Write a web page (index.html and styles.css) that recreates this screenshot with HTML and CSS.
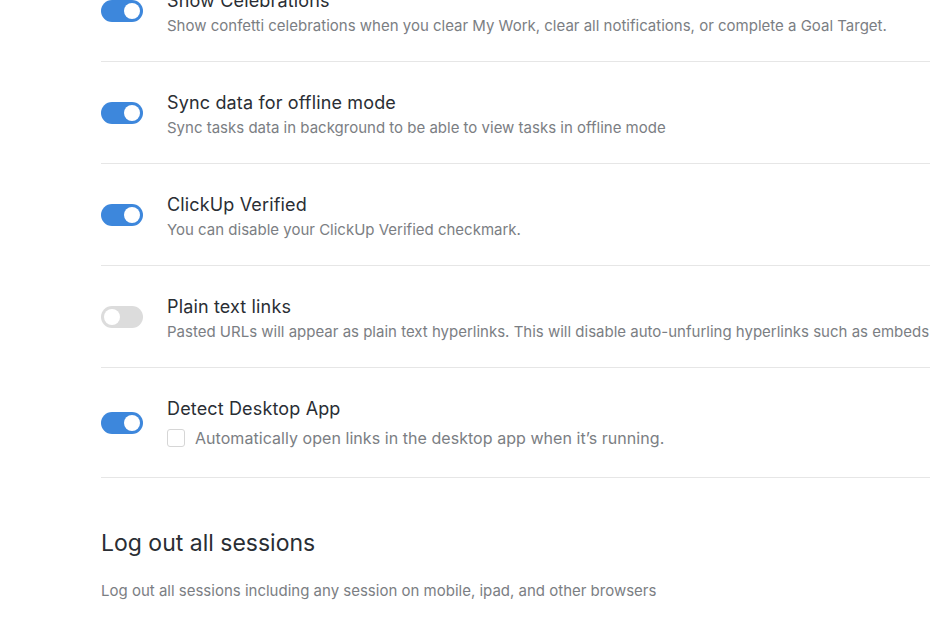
FILE: index.html
```html
<!DOCTYPE html>
<html>
<head>
<meta charset="utf-8">
<link rel="stylesheet" href="styles.css">
</head>
<body>
<div class="page">
  <div class="settings">
    <div class="row">
      <span class="toggle on"><span class="knob"></span></span>
      <div class="text">
        <div class="title">Show Celebrations</div>
        <div class="desc">Show confetti celebrations when you clear My Work, clear all notifications, or complete a Goal Target.</div>
      </div>
    </div>
    <div class="row">
      <span class="toggle on"><span class="knob"></span></span>
      <div class="text">
        <div class="title">Sync data for offline mode</div>
        <div class="desc">Sync tasks data in background to be able to view tasks in offline mode</div>
      </div>
    </div>
    <div class="row">
      <span class="toggle on"><span class="knob"></span></span>
      <div class="text">
        <div class="title">ClickUp Verified</div>
        <div class="desc">You can disable your ClickUp Verified checkmark.</div>
      </div>
    </div>
    <div class="row">
      <span class="toggle off"><span class="knob"></span></span>
      <div class="text">
        <div class="title">Plain text links</div>
        <div class="desc">Pasted URLs will appear as plain text hyperlinks. This will disable auto-unfurling hyperlinks such as embeds</div>
      </div>
    </div>
    <div class="row last">
      <span class="toggle on"><span class="knob"></span></span>
      <div class="text">
        <div class="title">Detect Desktop App</div>
        <label class="check"><span class="box"></span><span class="check-label">Automatically open links in the desktop app when it’s running.</span></label>
      </div>
    </div>
  </div>
  <section class="logout">
    <h2 class="heading">Log out all sessions</h2>
    <p class="logout-desc">Log out all sessions including any session on mobile, ipad, and other browsers</p>
  </section>
</div>
</body>
</html>
```

FILE: styles.css
```css
html, body {
  margin: 0;
  padding: 0;
  background: #ffffff;
  overflow: hidden;
}
body {
  font-family: Inter, "Noto Sans", "Liberation Sans", sans-serif;
  color: #2a2e34;
  width: 930px;
  height: 620px;
}
.page {
  padding-left: 101px;
  margin-top: -40px;
}
.settings {
  display: flex;
  flex-direction: column;
}
.row {
  display: flex;
  align-items: center;
  gap: 24px;
  height: 102px;
  border-bottom: 1px solid #e6e6e6;
  box-sizing: border-box;
}
.row.last {
  height: 110px;
}
.toggle {
  flex: none;
  width: 42px;
  height: 22px;
  border-radius: 11px;
  display: flex;
  align-items: center;
  box-sizing: border-box;
  padding: 0 3px;
}
.toggle.on {
  background: #3d87dc;
  justify-content: flex-end;
}
.toggle.off {
  background: #dcdcdc;
  justify-content: flex-start;
}
.knob {
  width: 16px;
  height: 16px;
  border-radius: 50%;
  background: #ffffff;
}
.text {
  display: flex;
  flex-direction: column;
  gap: 5px;
  white-space: nowrap;
  margin-top: 3px;
}
.row.last .text {
  margin-top: 0;
  gap: 9px;
}
.title {
  font-size: 18px;
  line-height: 22px;
  color: #2a2e34;
  letter-spacing: 0.15px;
}
.desc {
  font-size: 15px;
  line-height: 18px;
  color: #7b7e83;
  letter-spacing: 0;
}
.check {
  display: flex;
  align-items: center;
  gap: 10px;
}
.box {
  flex: none;
  width: 16px;
  height: 16px;
  border: 1px solid #d6d6d6;
  border-radius: 3px;
  background: #fff;
}
.check-label {
  font-size: 16px;
  line-height: 18px;
  color: #7b7e83;
  letter-spacing: 0.05px;
}
.logout {
  padding-top: 50px;
}
.heading {
  margin: 0;
  font-weight: 400;
  font-size: 23px;
  line-height: 30px;
  color: #2a2e34;
  letter-spacing: 0;
}
.logout-desc {
  margin: 24px 0 0 0;
  font-size: 15px;
  line-height: 18px;
  color: #7b7e83;
  letter-spacing: 0;
}
```
